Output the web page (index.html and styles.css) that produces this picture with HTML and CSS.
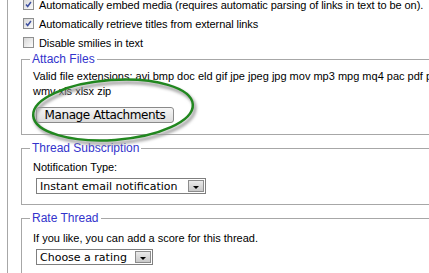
FILE: index.html
```html
<!DOCTYPE html>
<html lang="en">
<head>
    <meta charset="UTF-8">
    <title>Additional Options</title>
    <link rel="stylesheet" href="styles.css">
</head>
<body>
    <div class="page">
        <!-- Misc options -->
        <div class="opt">
            <span class="box"><svg viewBox="0 0 11 11"><path d="M2.5 5.5 L4.5 8 L8.5 2.5" /></svg></span>
            Automatically embed media (requires automatic parsing of links in text to be on).
        </div>
        <div class="opt">
            <span class="box"><svg viewBox="0 0 11 11"><path d="M2.5 5.5 L4.5 8 L8.5 2.5" /></svg></span>
            Automatically retrieve titles from external links
        </div>
        <div class="opt">
            <span class="box"></span>
            Disable smilies in text
        </div>

        <!-- Attachments -->
        <fieldset class="group attach">
            <legend>Attach Files</legend>
            <p class="ext">Valid file extensions: avi bmp doc eld gif jpe jpeg jpg mov mp3 mpg mq4 pac pdf plain<br>wmv xls xlsx zip</p>
            <button class="btn">Manage Attachments</button>
        </fieldset>

        <!-- Subscription -->
        <fieldset class="group subscribe">
            <legend>Thread <a href="#">Subscription</a></legend>
            <p class="label">Notification Type:</p>
            <div class="pick wide"><span>Instant email notification</span><span class="arrow"></span></div>
        </fieldset>

        <!-- Rating -->
        <fieldset class="group rate">
            <legend>Rate Thread</legend>
            <p class="label">If you like, you can add a score for this thread.</p>
            <div class="pick"><span>Choose a rating</span><span class="arrow"></span></div>
        </fieldset>

        <svg class="mark" width="240" height="160" viewBox="0 0 240 160">
            <defs>
                <filter id="soft" x="-20%" y="-20%" width="140%" height="140%">
                    <feGaussianBlur stdDeviation="1.6" />
                </filter>
            </defs>
            <ellipse cx="115" cy="113" rx="80" ry="30" transform="rotate(-4 115 113)" fill="none" stroke="#9a9a9a" stroke-width="3" filter="url(#soft)" />
            <ellipse cx="113" cy="110" rx="80" ry="30" transform="rotate(-4 113 110)" fill="none" stroke="#21871f" stroke-width="2.5" />
        </svg>
    </div>
</body>
</html>
```

FILE: styles.css
```css
* {
    box-sizing: border-box;
}

body {
    margin: 0;
    background: white;
    color: #000;
    font-family: 'Liberation Sans', Arial, sans-serif;
    font-size: 11px;
    overflow: hidden;
}

.page {
    position: relative;
    width: 600px;
    margin: -5px 0 0 7px;
    border-left: 1px solid #a7a7a7;
    min-height: 300px;
}

/* Checkbox rows */
.opt {
    display: flex;
    align-items: center;
    height: 19px;
    padding-left: 15px;
    white-space: nowrap;
    letter-spacing: -0.08px;
}

.box {
    width: 11px;
    height: 11px;
    margin-right: 5px;
    border: 1px solid #8e8f8f;
    background: linear-gradient(135deg, #d6d6d6, #fdfdfd);
    flex-shrink: 0;
}

.box svg {
    display: block;
    width: 9px;
    height: 9px;
}

.box path {
    fill: none;
    stroke: #3d4fa0;
    stroke-width: 1.8;
}

/* Fieldsets */
.group {
    margin: 0 0 0 13px;
    padding: 0 11px 12px;
    border: 1px solid #a7a7a7;
}

.group + .group {
    margin-top: 6px;
}

.attach {
    padding-bottom: 11px;
}

legend {
    margin-left: -3px;
    padding: 0 2px;
    font-size: 12px;
    line-height: 14px;
    color: #3333cc;
}

legend a {
    color: #3333cc;
    text-decoration: none;
}

.ext {
    margin: 3px 0 0;
    line-height: 15px;
    white-space: nowrap;
}

.label {
    margin: 5px 0 0;
    line-height: 15px;
}

.rate .label {
    margin-top: 6px;
}

.btn {
    display: block;
    width: 138px;
    height: 16px;
    margin: 8px 0 0 3px;
    padding: 0;
    border: 1px solid #8a8a8a;
    border-radius: 3px;
    background: linear-gradient(#f6f6f6, #dcdcdc);
    font-family: 'DejaVu Sans', Verdana, sans-serif;
    font-size: 12px;
    letter-spacing: -0.4px;
    line-height: 14px;
    color: #000;
}

/* Drop downs */
.subscribe {
    padding-bottom: 10px;
}

.pick {
    display: flex;
    align-items: center;
    justify-content: space-between;
    width: 117px;
    height: 16px;
    margin: 3px 0 0 3px;
    padding: 0 1px 0 3px;
    border: 1px solid #7f7f7f;
    background: white;
    font-family: 'DejaVu Sans', Verdana, sans-serif;
    font-size: 11px;
    white-space: nowrap;
}

.pick.wide {
    width: 170px;
}

.arrow {
    position: relative;
    width: 16px;
    height: 12px;
    border: 1px solid #8c8c8c;
    background: linear-gradient(#eaeaea, #c9c9c9);
}

.arrow::after {
    content: '';
    position: absolute;
    left: 4px;
    top: 5px;
    border-left: 3px solid transparent;
    border-right: 3px solid transparent;
    border-top: 3px solid #000;
}

/* Hand drawn highlight round the button */
.mark {
    position: absolute;
    left: -8px;
    top: 5px;
    pointer-events: none;
}
```
